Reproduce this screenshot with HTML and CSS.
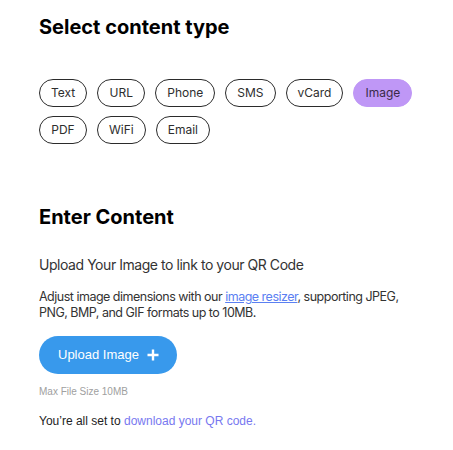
FILE: index.html
```html
<!DOCTYPE html>
<html lang="en">
<head>
<meta charset="utf-8">
<title>QR Code content</title>
<link rel="stylesheet" href="styles.css">
</head>
<body>
<main class="page">
  <h2 class="heading">Select content type</h2>
  <div class="pills">
    <button class="pill">Text</button>
    <button class="pill">URL</button>
    <button class="pill">Phone</button>
    <button class="pill">SMS</button>
    <button class="pill">vCard</button>
    <button class="pill pill-active">Image</button>
    <button class="pill">PDF</button>
    <button class="pill">WiFi</button>
    <button class="pill">Email</button>
  </div>

  <h2 class="heading heading-second">Enter Content</h2>
  <p class="lead">Upload Your Image to link to your QR Code</p>
  <p class="info">Adjust image dimensions with our <a class="resizer" href="#">image resizer</a>, supporting JPEG, PNG, BMP, and GIF formats up to 10MB.</p>
  <div class="upload-row">
    <button class="upload">Upload Image
      <svg class="plus" width="12" height="12" viewBox="0 0 12 12" aria-hidden="true"><path d="M6 0.5v11M0.5 6h11" stroke="#fff" stroke-width="2.4" fill="none"/></svg>
    </button>
  </div>
  <p class="max">Max File Size 10MB</p>
  <p class="ready">You’re all set to <a class="download" href="#">download your QR code.</a></p>
</main>
</body>
</html>
```

FILE: styles.css
```css
html, body {
  margin: 0;
  padding: 0;
  background: #ffffff;
}

.page {
  padding: 15px 0 0 39px;
  width: 375px;
  font-family: Inter, "Noto Sans", sans-serif;
  color: #161616;
}

.heading {
  margin: 0;
  font-size: 20px;
  line-height: 24px;
  font-weight: 700;
  color: #000;
}

.heading-second {
  margin-top: 61px;
}

.pills {
  display: flex;
  flex-wrap: wrap;
  column-gap: 10px;
  row-gap: 9px;
  margin-top: 40px;
  width: 400px;
}

.pill {
  box-sizing: border-box;
  height: 28px;
  min-width: 48px;
  padding: 0 11px;
  border: 1.5px solid #2b2b2b;
  border-radius: 14px;
  background: #fff;
  font-family: Inter, "Noto Sans", sans-serif;
  font-size: 12px;
  color: #2e2e2e;
  line-height: 1;
  cursor: pointer;
}

.pill-active {
  background: #bf97f6;
  border-color: #bf97f6;
  color: #3a2a48;
}

.lead {
  margin: 26px 0 0;
  font-size: 14px;
  line-height: 20px;
  letter-spacing: -0.45px;
  color: #333;
}

.info {
  margin: 14px 0 0;
  font-size: 12.5px;
  line-height: 15.5px;
  letter-spacing: -0.5px;
  color: #333;
}

.resizer {
  color: #5b80f2;
  text-decoration: underline;
}

.upload-row {
  display: flex;
  margin-top: 15.5px;
}

.upload {
  display: flex;
  align-items: center;
  gap: 8px;
  box-sizing: border-box;
  height: 38px;
  padding: 0 18px 0 19px;
  border: none;
  border-radius: 19px;
  background: #3899ec;
  color: #fff;
  font-family: "Liberation Sans", Arial, sans-serif;
  font-size: 13px;
  white-space: nowrap;
  cursor: pointer;
}

.plus {
  flex: none;
}

.max {
  margin: 12.5px 0 0;
  font-family: "Liberation Sans", Arial, sans-serif;
  font-size: 10px;
  line-height: 12px;
  color: #a0a0a0;
}

.ready {
  margin: 15.5px 0 0;
  font-family: "Liberation Sans", Arial, sans-serif;
  font-size: 12px;
  line-height: 15px;
  color: #222;
}

.download {
  color: #7878f0;
  text-decoration: none;
}
```
